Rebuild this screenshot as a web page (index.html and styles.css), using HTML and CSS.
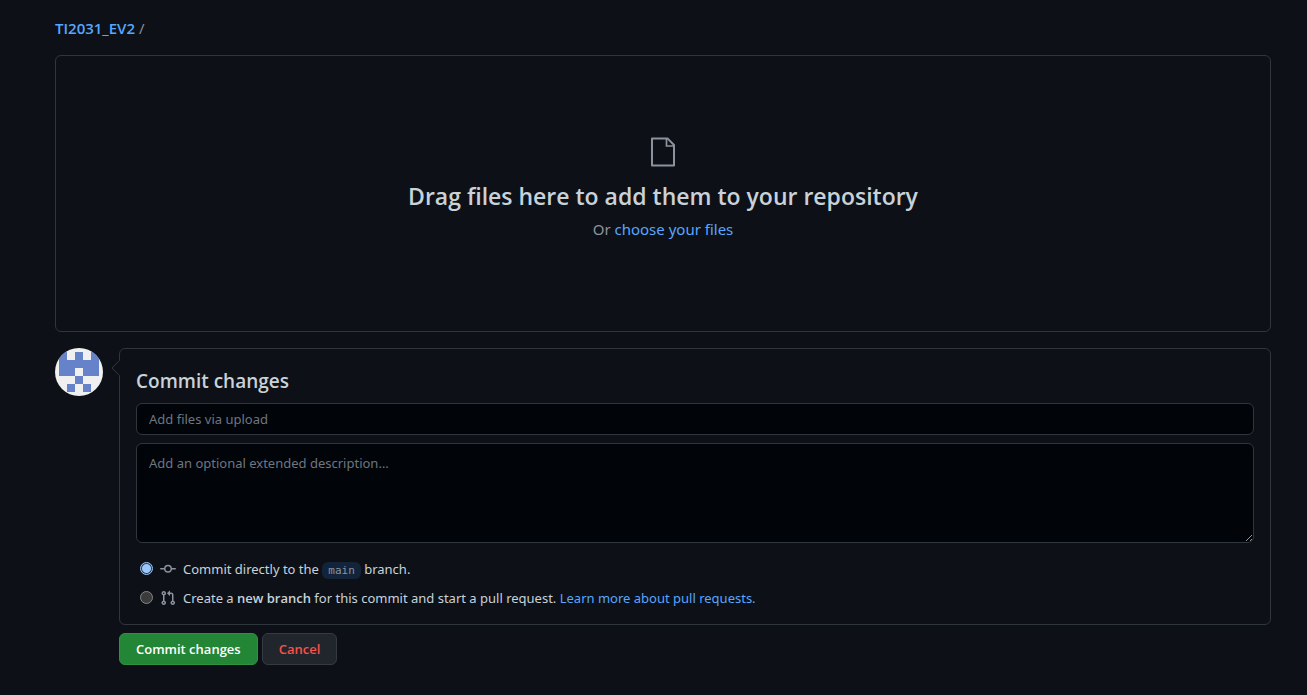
FILE: index.html
```html
<!DOCTYPE html>
<html lang="en">
<head>
<meta charset="utf-8">
<meta name="viewport" content="width=device-width, initial-scale=1">
<title>Upload files</title>
<link rel="stylesheet" href="styles.css">
</head>
<body>
<main class="page">
  <nav class="breadcrumb" aria-label="Breadcrumb"><a class="repo-link" href="#">TI2031_EV2</a> <span class="separator">/</span></nav>

  <section class="dropzone">
    <svg class="file-icon" viewBox="0 0 32 32" width="32" height="32" fill="none" stroke="currentColor" stroke-width="2" aria-hidden="true">
      <path d="M5 2.400h15.500L27 9V29.600H5z" stroke-linejoin="round"/>
      <path d="M19.500 2.500V10H27" stroke-width="1.700"/>
    </svg>
    <h1 class="dropzone-title">Drag files here to add them to your repository</h1>
    <p class="dropzone-hint">Or <a href="#">choose your files</a></p>
  </section>

  <form class="commit">
    <svg class="avatar" viewBox="0 0 48 48" width="48" height="48" role="img" aria-label="User avatar">
      <path fill="#f0f0f0" d="M0 0h48v48H0z"/>
      <path fill="#6683c9" d="M4 4h8v8h8V4h8v8h8V4h8v24H28v-8h-8v8H4zM20 28h8v8h-8zM12 36h8v8h-8zM28 36h8v8h-8z"/>
    </svg>
    <div class="commit-main">
      <div class="panel">
        <svg class="caret" viewBox="0 0 9 16" width="9" height="16" aria-hidden="true">
          <path fill="#0d1117" d="M9 0L1 8l8 8z"/>
          <path fill="none" stroke="#30363d" d="M8.500 0.500L1 8l7.500 7.500"/>
        </svg>
        <h2 class="panel-title">Commit changes</h2>
        <input class="field" type="text" placeholder="Add files via upload" aria-label="Commit summary">
        <textarea class="field description" placeholder="Add an optional extended description…" aria-label="Extended description"></textarea>
        <div class="choices">
          <div class="choice">
            <input class="radio" type="radio" name="target" id="direct" checked>
            <svg class="choice-icon" viewBox="0 0 16 16" width="16" height="16" fill="currentColor" aria-hidden="true"><path fill-rule="evenodd" d="M10.500 7.750a2.500 2.500 0 11-5 0 2.500 2.500 0 015 0zm1.430.750a4.002 4.002 0 01-7.860 0H.750a.750.750 0 110-1.500h3.320a4.001 4.001 0 017.860 0h3.320a.750.750 0 110 1.500h-3.320z"/></svg>
            <label for="direct">Commit directly to the <code class="branch">main</code> branch.</label>
          </div>
          <div class="choice">
            <input class="radio" type="radio" name="target" id="pull">
            <svg class="choice-icon" viewBox="0 0 16 16" width="16" height="16" fill="currentColor" aria-hidden="true"><path fill-rule="evenodd" d="M7.177 3.073L9.573.677A.250.250 0 0110 .854v4.792a.250.250 0 01-.427.177L7.177 3.427a.250.250 0 010-.354zM3.750 2.500a.750.750 0 100 1.500.750.750 0 000-1.500zm-2.250.750a2.250 2.250 0 113 2.122v5.256a2.251 2.251 0 11-1.500 0V5.372A2.250 2.250 0 011.500 3.250zM11 2.500h-1V4h1a1 1 0 011 1v5.628a2.251 2.251 0 101.500 0V5A2.500 2.500 0 0011 2.500zm1 10.250a.750.750 0 111.500 0 .750.750 0 01-1.500 0zM3.750 12a.750.750 0 100 1.500.750.750 0 000-1.500z"/></svg>
            <label for="pull">Create a <strong>new branch</strong> for this commit and start a pull request. <a href="#">Learn more about pull requests.</a></label>
          </div>
        </div>
      </div>
      <div class="actions">
        <button class="button primary" type="submit">Commit changes</button>
        <button class="button danger" type="button">Cancel</button>
      </div>
    </div>
  </form>
</main>
</body>
</html>
```
FILE: styles.css
```css
* { box-sizing: border-box; }

body {
  margin: 0;
  background: #0d1117;
  color: #c9d1d9;
  font: 13px/20px "Segoe UI", "Noto Sans", sans-serif;
}

a { color: #58a6ff; text-decoration: none; }
a:hover { text-decoration: underline; }
h1, h2, p { margin: 0; }
h1, h2, strong, .breadcrumb, .button {
  font-family: "Segoe UI", "Open Sans", sans-serif;
}
strong { font-weight: 600; }

.page { padding: 16px 36px 30px 55px; }

.breadcrumb {
  margin-bottom: 15px;
  font-size: 15px;
  line-height: 24px;
}
.repo-link { font-weight: 600; }
.separator, .dropzone-hint { color: #8b949e; }

.dropzone {
  display: flex;
  flex-direction: column;
  align-items: center;
  padding: 80px 16px 90px;
  border: 1px solid #30363d;
  border-radius: 6px;
  text-align: center;
}
.file-icon { color: #8b949e; }
.dropzone-title {
  margin-top: 10px;
  font-size: 23px;
  font-weight: 600;
  line-height: 36px;
}
.dropzone-hint {
  margin-top: 3px;
  font-size: 15px;
  line-height: 24px;
}

.commit {
  display: flex;
  gap: 16px;
  align-items: flex-start;
  margin-top: 16px;
}
.avatar { flex: none; border-radius: 50%; }
.commit-main { flex: 1; min-width: 0; }

.panel {
  position: relative;
  padding: 17px 16px 16px;
  border: 1px solid #30363d;
  border-radius: 6px;
}
.caret { position: absolute; top: 11px; left: -9px; }
.panel-title {
  margin-bottom: 7px;
  font-size: 19px;
  font-weight: 600;
  line-height: 30px;
}

.field {
  display: block;
  width: 100%;
  height: 32px;
  margin-bottom: 8px;
  padding: 5px 12px;
  border: 1px solid #30363d;
  border-radius: 6px;
  background: #010409;
  color: #c9d1d9;
  font: inherit;
}
.field::placeholder { color: #6e7681; opacity: 1; }
.description {
  height: 100px;
  padding: 9px 12px;
  resize: vertical;
  color-scheme: dark;
}

.choices { display: grid; gap: 9px; margin-top: 16px; }
.choice { display: flex; align-items: center; padding-left: 4px; }
.radio {
  appearance: none;
  flex: none;
  width: 13px;
  height: 13px;
  margin: 0 7px 2px 0;
  border: 1px solid #858585;
  border-radius: 50%;
  background: #3b3b3b;
}
.radio:checked {
  border-color: #99c8ff;
  background: radial-gradient(circle, #99c8ff 4px, #3b3b3b 5px);
}
.choice-icon { flex: none; margin-right: 7px; color: #8b949e; }
.branch {
  padding: 2px 6px;
  border-radius: 6px;
  background: #13233a;
  color: #8b949e;
  font: 11px "DejaVu Sans Mono", monospace;
}

.actions { display: flex; gap: 4px; margin-top: 8px; }
.button {
  padding: 5px 16px;
  border: 1px solid #363b42;
  border-radius: 6px;
  background: #21262d;
  font-size: 13px;
  font-weight: 600;
  line-height: 20px;
  cursor: pointer;
}
.primary { border-color: #2f9142; background: #238636; color: #fff; }
.danger { color: #f85149; }
```
